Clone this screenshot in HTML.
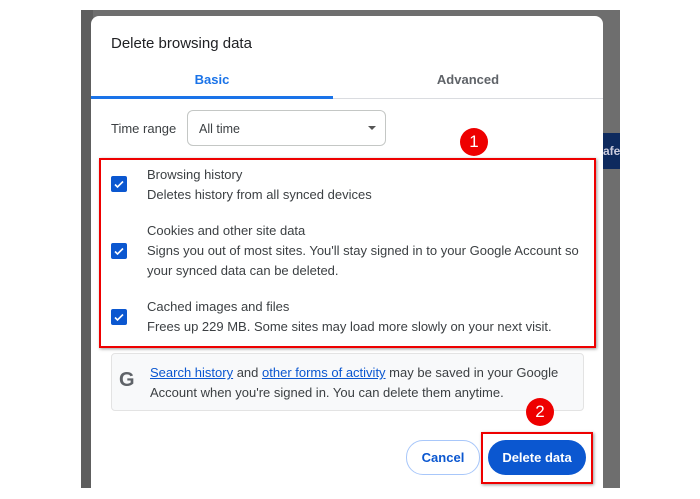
<!DOCTYPE html><html><head><style>
body{margin:0;width:700px;height:499px;background:#fff;position:relative;overflow:hidden;font-family:"Liberation Sans",sans-serif;}
.a{position:absolute}
.t{font-size:13px;color:#3c4043}
.cb{position:absolute;left:111px;width:16px;height:16px;background:#0b57d0;border-radius:2px}
.cb svg{position:absolute;left:2px;top:2px}
.badge{position:absolute;width:28px;height:28px;border-radius:50%;background:#e00;color:#fff;font-size:17px;text-align:center;line-height:28px}
</style></head><body>
<div class="a" style="left:81px;top:10px;width:539px;height:478px;background:#6e6e6e"></div>
<div class="a" style="left:81px;top:10px;width:12px;height:478px;background:#5e5e5e"></div>
<div class="a" style="left:91px;top:16px;width:512px;height:472px;background:#fff;border-radius:8px 8px 0 0"></div>
<div class="a" style="left:603px;top:133px;width:17px;height:36px;background:#0e2a5e;color:#ccd;font-size:12px;font-weight:bold;line-height:36px">afe</div>
<div class="a" style="left:111px;top:35px;font-size:15px;color:#202124">Delete browsing data</div>
<div class="a" style="left:91px;top:72px;width:242px;text-align:center;font-size:13px;font-weight:bold;color:#1a73e8">Basic</div>
<div class="a" style="left:333px;top:72px;width:270px;text-align:center;font-size:13px;font-weight:bold;color:#5f6368">Advanced</div>
<div class="a" style="left:91px;top:98px;width:512px;height:1px;background:#dadce0"></div>
<div class="a" style="left:91px;top:96px;width:242px;height:3px;background:#1a73e8"></div>
<div class="a t" style="left:111px;top:121px">Time range</div>
<div class="a" style="left:187px;top:110px;width:197px;height:34px;border:1px solid #c4c7c5;border-radius:6px"></div>
<div class="a t" style="left:199px;top:122px;font-size:12.5px">All time</div>
<div class="a" style="left:368px;top:126px;width:0;height:0;border-left:4px solid transparent;border-right:4px solid transparent;border-top:4px solid #555"></div>
<div class="a" style="left:99px;top:158px;width:493px;height:186px;border:2px solid #e00;box-shadow:1px 1px 3px rgba(0,0,0,.4)"></div>
<div class="cb" style="top:176px"><svg width="12" height="12"><path d="M2 6.5l2.5 2.5L10 3.5" stroke="#fff" stroke-width="1.6" fill="none"/></svg></div>
<div class="cb" style="top:243px"><svg width="12" height="12"><path d="M2 6.5l2.5 2.5L10 3.5" stroke="#fff" stroke-width="1.6" fill="none"/></svg></div>
<div class="cb" style="top:309px"><svg width="12" height="12"><path d="M2 6.5l2.5 2.5L10 3.5" stroke="#fff" stroke-width="1.6" fill="none"/></svg></div>
<div class="a t" style="left:147px;top:165px;line-height:20px">Browsing history<br>Deletes history from all synced devices</div>
<div class="a t" style="left:147px;top:221px;line-height:20px">Cookies and other site data<br>Signs you out of most sites. You'll stay signed in to your Google Account so<br>your synced data can be deleted.</div>
<div class="a t" style="left:147px;top:297px;line-height:20px">Cached images and files<br>Frees up 229 MB. Some sites may load more slowly on your next visit.</div>
<div class="a" style="left:111px;top:353px;width:471px;height:56px;background:#f8f9fa;border:1px solid #e3e3e3;border-radius:4px"></div>
<div class="a" style="left:119px;top:369px;font-size:20px;font-weight:bold;color:#5f6368">G</div>
<div class="a t" style="left:150px;top:363px;line-height:20px"><span style="color:#0b57d0;text-decoration:underline">Search history</span> and <span style="color:#0b57d0;text-decoration:underline">other forms of activity</span> may be saved in your Google<br>Account when you're signed in. You can delete them anytime.</div>
<div class="a" style="left:406px;top:440px;width:72px;height:33px;border:1px solid #a8c7fa;border-radius:17px;text-align:center;line-height:33px;font-size:13px;font-weight:bold;color:#0b57d0">Cancel</div>
<div class="a" style="left:488px;top:440px;width:98px;height:35px;background:#0b57d0;border-radius:18px;text-align:center;line-height:35px;font-size:13px;font-weight:bold;color:#fff">Delete data</div>
<div class="a" style="left:481px;top:432px;width:108px;height:48px;border:2px solid #e00;box-shadow:1px 1px 3px rgba(0,0,0,.4)"></div>
<div class="badge" style="left:460px;top:128px">1</div>
<div class="badge" style="left:526px;top:398px">2</div>
</body></html>
